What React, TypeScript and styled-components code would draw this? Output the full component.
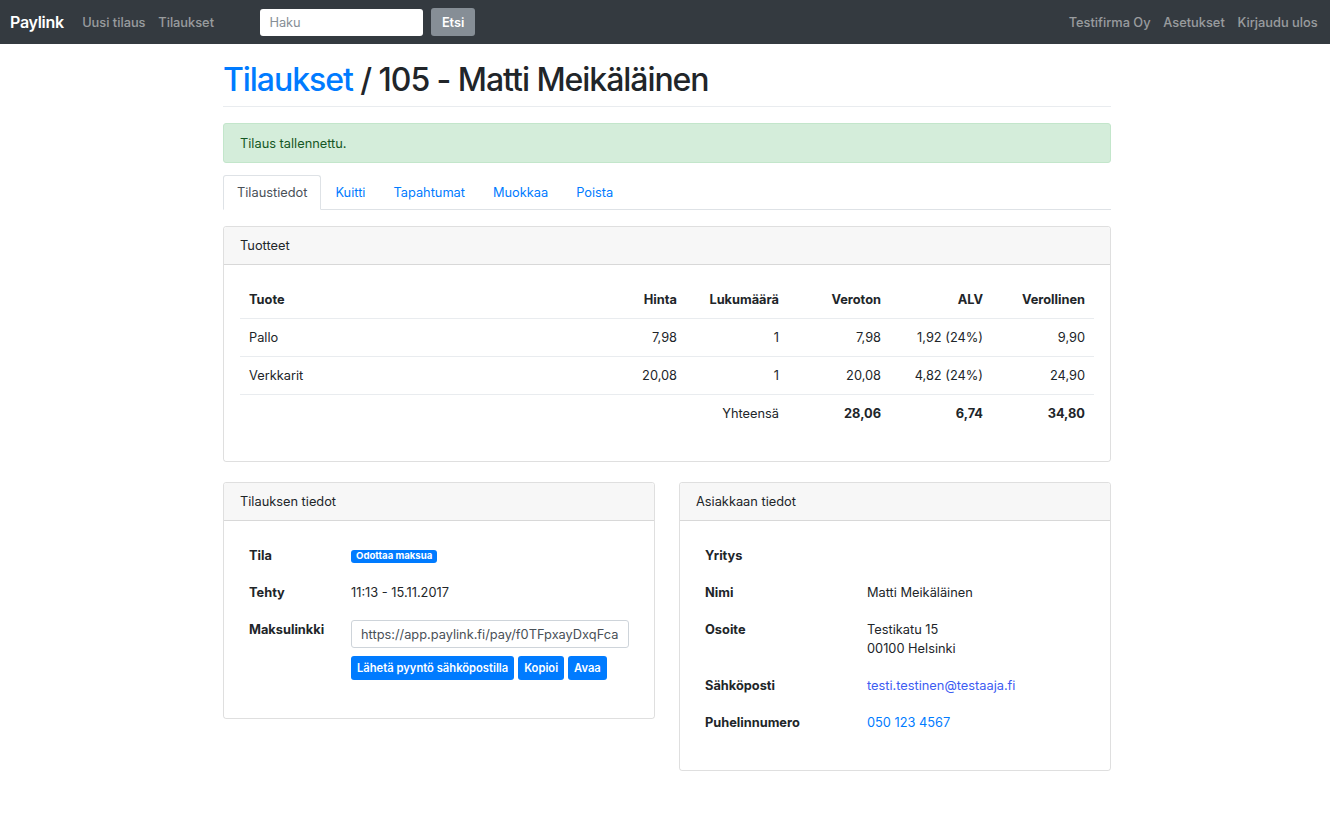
import React from "react";
import styled, { createGlobalStyle } from "styled-components";

const GlobalStyle = createGlobalStyle`
  body {
    margin: 0;
    font-family: Inter, "Liberation Sans", sans-serif;
    font-size: 12.8px;
    line-height: 19px;
    color: #212529;
    background: #fff;
  }
  * {
    box-sizing: border-box;
  }
`;

const Navbar = styled.nav`
  display: flex;
  align-items: center;
  height: 44px;
  padding: 0 6px 0 10px;
  background: #343a40;
`;

const Brand = styled.span`
  color: #fff;
  font-size: 16px;
  font-weight: 600;
  letter-spacing: -0.3px;
  margin-right: 12px;
`;

const NavLink = styled.a`
  color: rgba(255, 255, 255, 0.5);
  font-weight: 500;
  padding: 0 6.4px;
  text-decoration: none;
`;

const SearchForm = styled.form`
  display: flex;
  align-items: center;
  gap: 8px;
  margin-left: 40px;
`;

const SearchInput = styled.input`
  width: 163px;
  height: 27px;
  padding: 0 9px;
  border: 0;
  border-radius: 3px;
  font: inherit;
  color: #495057;

  &::placeholder {
    color: #868e96;
  }
`;

const GrayButton = styled.button`
  height: 28px;
  padding: 0 10.5px;
  border: 0;
  border-radius: 3px;
  background: #868e96;
  color: #fff;
  font: inherit;
  font-weight: 600;
`;

const NavRight = styled.div`
  margin-left: auto;
  display: flex;
`;

const Container = styled.main`
  width: 892px;
  margin: 0 auto;
  padding: 0 0 40px 4px;
`;

const PageHeader = styled.div`
  padding-top: 17px;
  padding-bottom: 7px;
  border-bottom: 1px solid #e9ecef;
`;

const Title = styled.h1`
  margin: 0;
  font-size: 32px;
  font-weight: 500;
  line-height: 38px;
  letter-spacing: -1.05px;

  a {
    color: #007bff;
    text-decoration: none;
  }
`;

const Alert = styled.div`
  margin-top: 16px;
  padding: 9.6px 16px;
  border: 1px solid #c3e6cb;
  border-radius: 3px;
  background: #d4edda;
  color: #155724;
`;

const Tabs = styled.ul`
  display: flex;
  list-style: none;
  margin: 12px 0 0;
  padding: 0;
  border-bottom: 1px solid #dee2e6;
`;

const Tab = styled.li<{ $active?: boolean }>`
  margin-bottom: -1px;
  padding: 7px 13px;
  border: 1px solid transparent;
  border-color: ${(p) => (p.$active ? "#dee2e6 #dee2e6 #fff" : "transparent")};
  border-radius: 3px 3px 0 0;
  background: ${(p) => (p.$active ? "#fff" : "transparent")};
  color: ${(p) => (p.$active ? "#495057" : "#007bff")};
`;

const Card = styled.section<{ $top?: number }>`
  margin-top: ${(p) => p.$top ?? 16}px;
  border: 1px solid rgba(0, 0, 0, 0.125);
  border-radius: 3px;
  overflow: hidden;
`;

const CardHeader = styled.header`
  padding: 9px 16px;
  background: #f7f7f7;
  border-bottom: 1px solid rgba(0, 0, 0, 0.125);
`;

const CardBody = styled.div`
  padding: 16px;
`;

const Table = styled.table`
  width: 100%;
  border-collapse: collapse;
  margin-bottom: 13px;

  th,
  td {
    padding: 9px;
    text-align: right;
    vertical-align: top;
  }
  th:first-child,
  td:first-child {
    text-align: left;
  }
  tbody tr,
  tfoot tr {
    border-top: 1px solid #e9ecef;
  }
`;

const NumCol = styled.col`
  width: 102px;
`;

const Strong = styled.td`
  font-weight: 700;
`;

const Columns = styled.div`
  display: grid;
  grid-template-columns: 1fr 1fr;
  gap: 24px;
  align-items: start;
`;

const InfoTable = styled.div<{ $label: number }>`
  display: grid;
  grid-template-columns: ${(p) => p.$label}px 1fr;
  margin-bottom: 13px;
`;

const InfoLabel = styled.div`
  padding: 9px;
  font-weight: 700;
`;

const InfoValue = styled.div`
  padding: 9px;
  min-width: 0;
`;

const Badge = styled.span`
  display: inline-block;
  padding: 1px 5px 2px;
  border-radius: 3px;
  background: #007bff;
  color: #fff;
  font-size: 9.6px;
  font-weight: 700;
  line-height: 10px;
  vertical-align: 1px;
`;

const LinkInput = styled.input`
  display: block;
  width: 278px;
  height: 28px;
  padding: 0 9px;
  border: 1px solid #ced4da;
  border-radius: 3px;
  font: inherit;
  color: #495057;
`;

const ButtonRow = styled.div`
  display: flex;
  gap: 4px;
  margin-top: 8px;
`;

const SmallButton = styled.button`
  height: 24px;
  padding: 0 6px;
  border: 0;
  border-radius: 3px;
  background: #007bff;
  color: #fff;
  font: inherit;
  font-size: 11.2px;
  font-weight: 600;
`;

const Link = styled.a<{ $visited?: boolean }>`
  color: ${(p) => (p.$visited ? "#3d5cf2" : "#007bff")};
  text-decoration: none;
`;

const products = [
  { name: "Pallo", price: "7,98", qty: 1, net: "7,98", vat: "1,92 (24%)", gross: "9,90" },
  { name: "Verkkarit", price: "20,08", qty: 1, net: "20,08", vat: "4,82 (24%)", gross: "24,90" },
];

export default function App() {
  return (
    <>
      <GlobalStyle />
      <Navbar>
        <Brand>Paylink</Brand>
        <NavLink>Uusi tilaus</NavLink>
        <NavLink>Tilaukset</NavLink>
        <SearchForm onSubmit={(e) => e.preventDefault()}>
          <SearchInput placeholder="Haku" />
          <GrayButton>Etsi</GrayButton>
        </SearchForm>
        <NavRight>
          <NavLink>Testifirma Oy</NavLink>
          <NavLink>Asetukset</NavLink>
          <NavLink>Kirjaudu ulos</NavLink>
        </NavRight>
      </Navbar>

      <Container>
        <PageHeader>
          <Title>
            <a href="#">Tilaukset</a> / 105 - Matti Meikäläinen
          </Title>
        </PageHeader>

        <Alert>Tilaus tallennettu.</Alert>

        <Tabs>
          <Tab $active>Tilaustiedot</Tab>
          <Tab>Kuitti</Tab>
          <Tab>Tapahtumat</Tab>
          <Tab>Muokkaa</Tab>
          <Tab>Poista</Tab>
        </Tabs>

        <Card>
          <CardHeader>Tuotteet</CardHeader>
          <CardBody>
            <Table>
              <colgroup>
                <col />
                <NumCol />
                <NumCol />
                <NumCol />
                <NumCol />
                <NumCol />
              </colgroup>
              <thead>
                <tr>
                  <th>Tuote</th>
                  <th>Hinta</th>
                  <th>Lukumäärä</th>
                  <th>Veroton</th>
                  <th>ALV</th>
                  <th>Verollinen</th>
                </tr>
              </thead>
              <tbody>
                {products.map((p) => (
                  <tr key={p.name}>
                    <td>{p.name}</td>
                    <td>{p.price}</td>
                    <td>{p.qty}</td>
                    <td>{p.net}</td>
                    <td>{p.vat}</td>
                    <td>{p.gross}</td>
                  </tr>
                ))}
              </tbody>
              <tfoot>
                <tr>
                  <td />
                  <td />
                  <td>Yhteensä</td>
                  <Strong>28,06</Strong>
                  <Strong>6,74</Strong>
                  <Strong>34,80</Strong>
                </tr>
              </tfoot>
            </Table>
          </CardBody>
        </Card>

        <Columns>
          <Card $top={20}>
            <CardHeader>Tilauksen tiedot</CardHeader>
            <CardBody>
              <InfoTable $label={102}>
                <InfoLabel>Tila</InfoLabel>
                <InfoValue>
                  <Badge>Odottaa maksua</Badge>
                </InfoValue>
                <InfoLabel>Tehty</InfoLabel>
                <InfoValue>11:13 - 15.11.2017</InfoValue>
                <InfoLabel>Maksulinkki</InfoLabel>
                <InfoValue>
                  <LinkInput readOnly value="https://app.paylink.fi/pay/f0TFpxayDxqFca" />
                  <ButtonRow>
                    <SmallButton>Lähetä pyyntö sähköpostilla</SmallButton>
                    <SmallButton>Kopioi</SmallButton>
                    <SmallButton>Avaa</SmallButton>
                  </ButtonRow>
                </InfoValue>
              </InfoTable>
            </CardBody>
          </Card>

          <Card $top={20}>
            <CardHeader>Asiakkaan tiedot</CardHeader>
            <CardBody>
              <InfoTable $label={162}>
                <InfoLabel>Yritys</InfoLabel>
                <InfoValue />
                <InfoLabel>Nimi</InfoLabel>
                <InfoValue>Matti Meikäläinen</InfoValue>
                <InfoLabel>Osoite</InfoLabel>
                <InfoValue>
                  Testikatu 15
                  <br />
                  00100 Helsinki
                </InfoValue>
                <InfoLabel>Sähköposti</InfoLabel>
                <InfoValue>
                  <Link href="#" $visited>
                    testi.testinen@testaaja.fi
                  </Link>
                </InfoValue>
                <InfoLabel>Puhelinnumero</InfoLabel>
                <InfoValue>
                  <Link href="#">050 123 4567</Link>
                </InfoValue>
              </InfoTable>
            </CardBody>
          </Card>
        </Columns>
      </Container>
    </>
  );
}
